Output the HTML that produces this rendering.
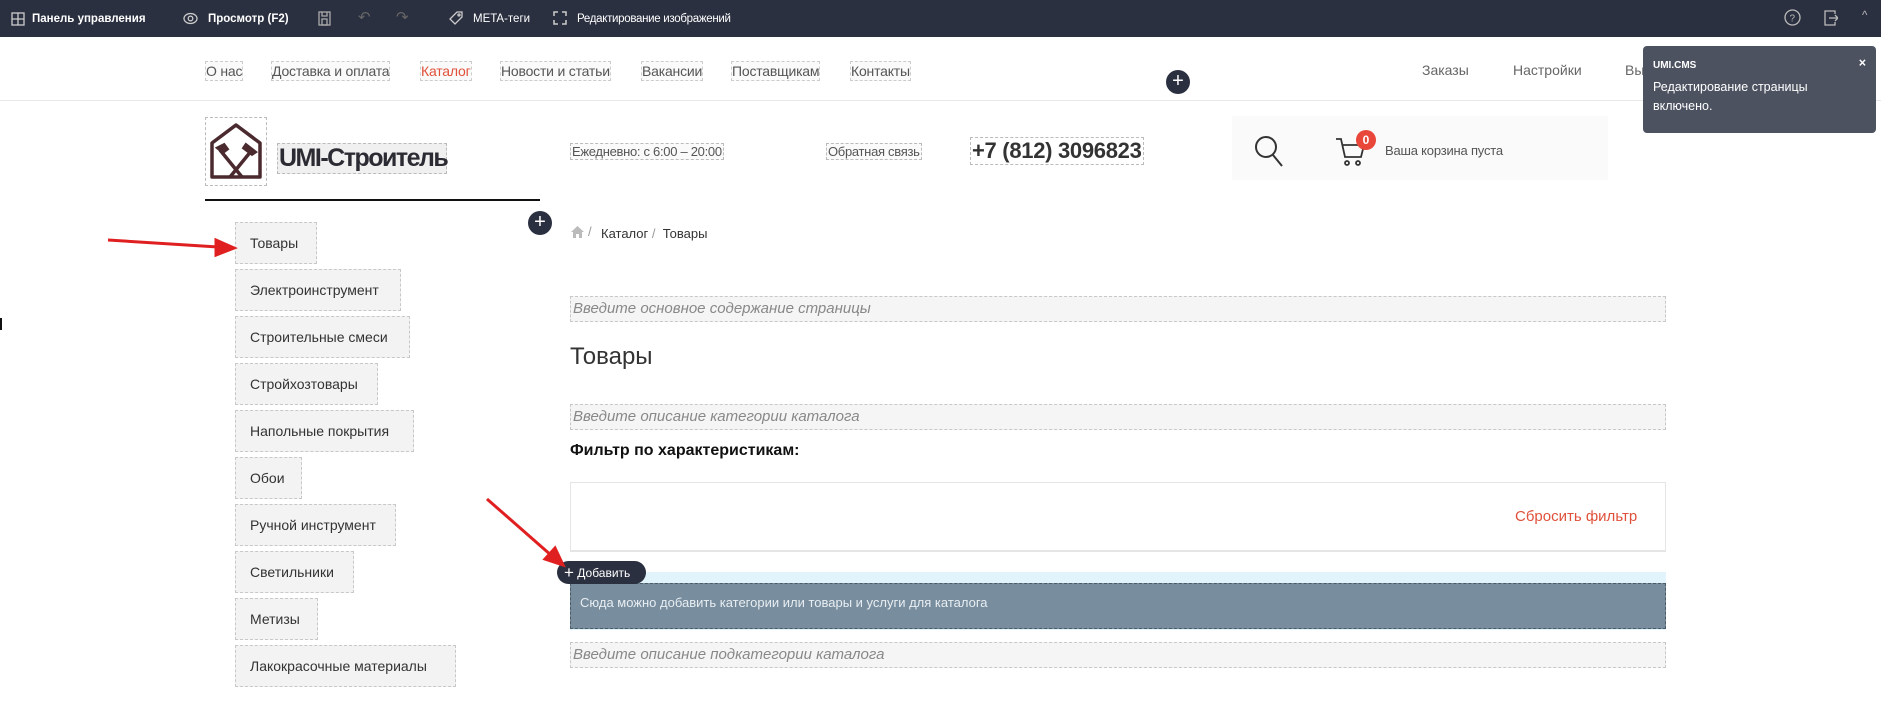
<!DOCTYPE html>
<html><head><meta charset="utf-8"><style>
*{margin:0;padding:0;box-sizing:border-box}
body{width:1881px;height:707px;overflow:hidden;background:#fff;font-family:"Liberation Sans",sans-serif;position:relative;color:#333}
.a{position:absolute;white-space:nowrap}
.tb{position:absolute;left:0;top:0;width:1881px;height:37px;background:#2b3040;color:#fff;font-size:11.5px}
.tb .a{top:11px}
.tb .t{top:13px}
.dash{border:1px dashed #bbb}
.nav{font-size:14px;color:#555;top:61px;border:1px dashed #ccc;background:#fafafa;padding:1px 0;letter-spacing:-0.2px}
.mi{position:absolute;left:235px;height:42px;background:#f3f3f3;border:1px dashed #c8c8c8;font-size:14px;color:#333;padding:0 14px;line-height:40px}
.fld{position:absolute;left:570px;width:1096px;height:26px;background:#f5f5f5;border:1px dashed #c8c8c8;font-style:italic;color:#888;font-size:15px;line-height:24px;padding-left:2px}
</style></head><body>
<div class="tb">
<svg class="a" style="left:11px;top:12px" width="14" height="14" viewBox="0 0 14 14" fill="none" stroke="#ccc" stroke-width="1.3"><rect x="1" y="1" width="12" height="12"/><path d="M7 1v12M1 7h12"/></svg>
<div class="a t" style="left:32px;font-weight:bold">Панель управления</div>
<svg class="a" style="left:183px;top:12px" width="15" height="13" viewBox="0 0 15 13" fill="none" stroke="#ccc" stroke-width="1.3"><ellipse cx="7.5" cy="6.5" rx="6.5" ry="5"/><circle cx="7.5" cy="6.5" r="2.3"/></svg>
<div class="a t" style="left:208px;font-weight:bold">Просмотр (F2)</div>
<svg class="a" style="left:318px;top:11px" width="13" height="15" viewBox="0 0 13 15" fill="none" stroke="#aaa" stroke-width="1.3"><rect x="1" y="1" width="11" height="13"/><rect x="4" y="8" width="5" height="6"/><path d="M4 1v4h5V1"/></svg>
<div class="a" style="left:358px;color:#666;font-size:15px;top:8px">↶</div>
<div class="a" style="left:396px;color:#666;font-size:15px;top:8px">↷</div>
<svg class="a" style="left:449px;top:11px" width="14" height="14" viewBox="0 0 14 14" fill="none" stroke="#ccc" stroke-width="1.3"><path d="M8 1h5v5l-7 7-5-5z"/><circle cx="10" cy="4" r="1"/></svg>
<div class="a t" style="left:473px">META-теги</div>
<svg class="a" style="left:553px;top:11px" width="14" height="14" viewBox="0 0 14 14" fill="none" stroke="#ccc" stroke-width="1.5"><path d="M1 5V1h4M9 1h4v4M13 9v4H9M5 13H1V9"/></svg>
<div class="a t" style="left:577px;letter-spacing:-0.3px">Редактирование изображений</div>
<svg class="a" style="left:1784px;top:9px" width="17" height="17" viewBox="0 0 17 17" fill="none" stroke="#bbb" stroke-width="1.3"><circle cx="8.5" cy="8.5" r="7.5"/><text x="5.5" y="12.5" fill="#bbb" stroke="none" font-size="10" font-family="Liberation Sans">?</text></svg>
<svg class="a" style="left:1824px;top:10px" width="14" height="16" viewBox="0 0 14 16" fill="none" stroke="#bbb" stroke-width="1.3"><path d="M11 4V1H1v14h10v-3M5 8h9M11 5l3 3-3 3"/></svg>
<div class="a" style="left:1862px;color:#bbb;top:10px">^</div>
</div>

<div class="a nav" style="left:205px">О нас</div>
<div class="a nav" style="left:271px">Доставка и оплата</div>
<div class="a nav" style="left:420px;color:#e0503a">Каталог</div>
<div class="a nav" style="left:500px">Новости и статьи</div>
<div class="a nav" style="left:641px">Вакансии</div>
<div class="a nav" style="left:731px">Поставщикам</div>
<div class="a nav" style="left:850px">Контакты</div>
<div class="a" style="left:1422px;top:62px;font-size:14px;color:#666">Заказы</div>
<div class="a" style="left:1513px;top:62px;font-size:14px;color:#666">Настройки</div>
<div class="a" style="left:1625px;top:62px;font-size:14px;color:#666">Вы</div>
<div class="a" style="left:1166px;top:70px;width:24px;height:24px;border-radius:50%;background:#2b3040;color:#fff;text-align:center;font-size:20px;line-height:23px">+</div>
<div class="a" style="left:0;top:100px;width:1881px;height:1px;background:#e8e8e8"></div>

<div class="a" style="left:1643px;top:46px;width:233px;height:87px;background:#4d5261;border-radius:4px;color:#fff;font-size:12.5px;padding:10px 0 0 10px;line-height:19px">
<div style="font-size:10px;font-weight:bold">UMI.CMS</div>
<div style="position:absolute;right:10px;top:8px;font-weight:bold">×</div>
<div style="margin-top:3px">Редактирование страницы<br>включено.</div></div>

<div class="a dash" style="left:205px;top:117px;width:62px;height:69px;background:#fff">
<svg width="60" height="67" viewBox="0 0 60 67" fill="none" stroke="#4a2a2e" stroke-width="3.5"><path d="M6 25L30 7l24 18v34H6z" stroke-linejoin="round"/><path d="M14 32l22 27M46 32L24 59" /><path d="M12 30l6-3 3 4-4 3z" fill="#4a2a2e"/><path d="M40 27l9 7-3 2-8-6z" fill="#4a2a2e"/></svg></div>
<div class="a" style="left:277px;top:143px;width:170px;height:31px;background:#f0f0f0;border:1px dashed #bbb;font-size:25px;font-weight:bold;color:#2b2b33;line-height:29px;letter-spacing:-1.5px;padding-left:1px">UMI-Строитель</div>
<div class="a dash" style="left:570px;top:143px;font-size:13px;color:#555;padding:0 1px;background:#fafafa;letter-spacing:-0.3px">Ежедневно: с 6:00 – 20:00</div>
<div class="a dash" style="left:826px;top:143px;font-size:13px;color:#555;padding:0 1px;background:#fafafa;letter-spacing:-0.3px">Обратная связь</div>
<div class="a dash" style="left:970px;top:137px;font-size:22px;font-weight:bold;color:#333;padding:0 1px;letter-spacing:-0.3px">+7 (812) 3096823</div>
<div class="a" style="left:1232px;top:116px;width:376px;height:64px;background:#fafafa"></div>
<svg class="a" style="left:1254px;top:135px" width="30" height="32" viewBox="0 0 30 32" fill="none" stroke="#333" stroke-width="2"><circle cx="12" cy="12" r="10"/><path d="M19 20l9 11"/></svg>
<svg class="a" style="left:1335px;top:137px" width="32" height="30" viewBox="0 0 32 30" fill="none" stroke="#333" stroke-width="1.8"><path d="M1 2h5l4 18h16l3-12H8"/><circle cx="12" cy="26" r="2"/><circle cx="23" cy="26" r="2"/></svg>
<div class="a" style="left:1356px;top:130px;width:20px;height:20px;border-radius:50%;background:#e8473a;color:#fff;font-size:12px;font-weight:bold;text-align:center;line-height:20px">0</div>
<div class="a" style="left:1385px;top:143px;font-size:13px;color:#555;letter-spacing:-0.2px">Ваша корзина пуста</div>
<div class="a" style="left:205px;top:199px;width:335px;height:2px;background:#111"></div>
<div class="a" style="left:528px;top:211px;width:24px;height:24px;border-radius:50%;background:#2b3040;color:#fff;text-align:center;font-size:20px;line-height:23px">+</div>

<div class="mi" style="top:222px;width:82px">Товары</div>
<div class="mi" style="top:269px;width:166px">Электроинструмент</div>
<div class="mi" style="top:316px;width:175px">Строительные смеси</div>
<div class="mi" style="top:363px;width:143px">Стройхозтовары</div>
<div class="mi" style="top:410px;width:179px">Напольные покрытия</div>
<div class="mi" style="top:457px;width:67px">Обои</div>
<div class="mi" style="top:504px;width:161px">Ручной инструмент</div>
<div class="mi" style="top:551px;width:119px">Светильники</div>
<div class="mi" style="top:598px;width:83px">Метизы</div>
<div class="mi" style="top:645px;width:221px">Лакокрасочные материалы</div>

<svg class="a" style="left:571px;top:226px" width="13" height="12" viewBox="0 0 13 12" fill="#bbb"><path d="M6.5 0L0 6h2v6h3V8h3v4h3V6h2z"/></svg>
<div class="a" style="left:588px;top:224px;color:#999;font-size:13px">/</div>
<div class="a" style="left:601px;top:226px;font-size:13px;color:#333">Каталог <span style="color:#999">/</span>&nbsp; Товары</div>
<div class="fld" style="top:296px">Введите основное содержание страницы</div>
<div class="a" style="left:570px;top:343px;font-size:24px;color:#333">Товары</div>
<div class="fld" style="top:404px">Введите описание категории каталога</div>
<div class="a" style="left:570px;top:442px;font-size:16px;font-weight:bold;color:#111">Фильтр по характеристикам:</div>
<div class="a" style="left:570px;top:482px;width:1096px;height:70px;border:1px solid #e5e5e5;border-bottom:2px solid #e5e5e5"></div>
<div class="a" style="left:1515px;top:508px;font-size:15px;color:#e0503a">Сбросить фильтр</div>
<div class="a" style="left:570px;top:572px;width:1096px;height:58px;background:#e1f3fb"></div>
<div class="a" style="left:570px;top:583px;width:1096px;height:46px;background:#788d9e;border:1px dashed #4a5a66;color:#e8eef2;font-size:13px;padding:11px 9px">Сюда можно добавить категории или товары и услуги для каталога</div>
<div class="a" style="left:557px;top:561px;width:89px;height:23px;border-radius:12px;background:#2b3040;color:#fff;font-size:12px;line-height:23px;padding-left:7px"><span style="font-size:17px;vertical-align:-1px">+</span> Добавить</div>
<div class="fld" style="top:642px">Введите описание подкатегории каталога</div>

<div class="a" style="left:0;top:318px;width:2px;height:12px;background:#111"></div>
<svg class="a" style="left:0;top:0" width="1881" height="707" viewBox="0 0 1881 707"><g stroke="#e02020" stroke-width="3" fill="#e02020"><path d="M108 240L218 247"/><path d="M234 248l-18-8 0 15z"/><path d="M487 499L552 556"/><path d="M563 565l-8-17-10 11z"/></g></svg>
</body></html>
